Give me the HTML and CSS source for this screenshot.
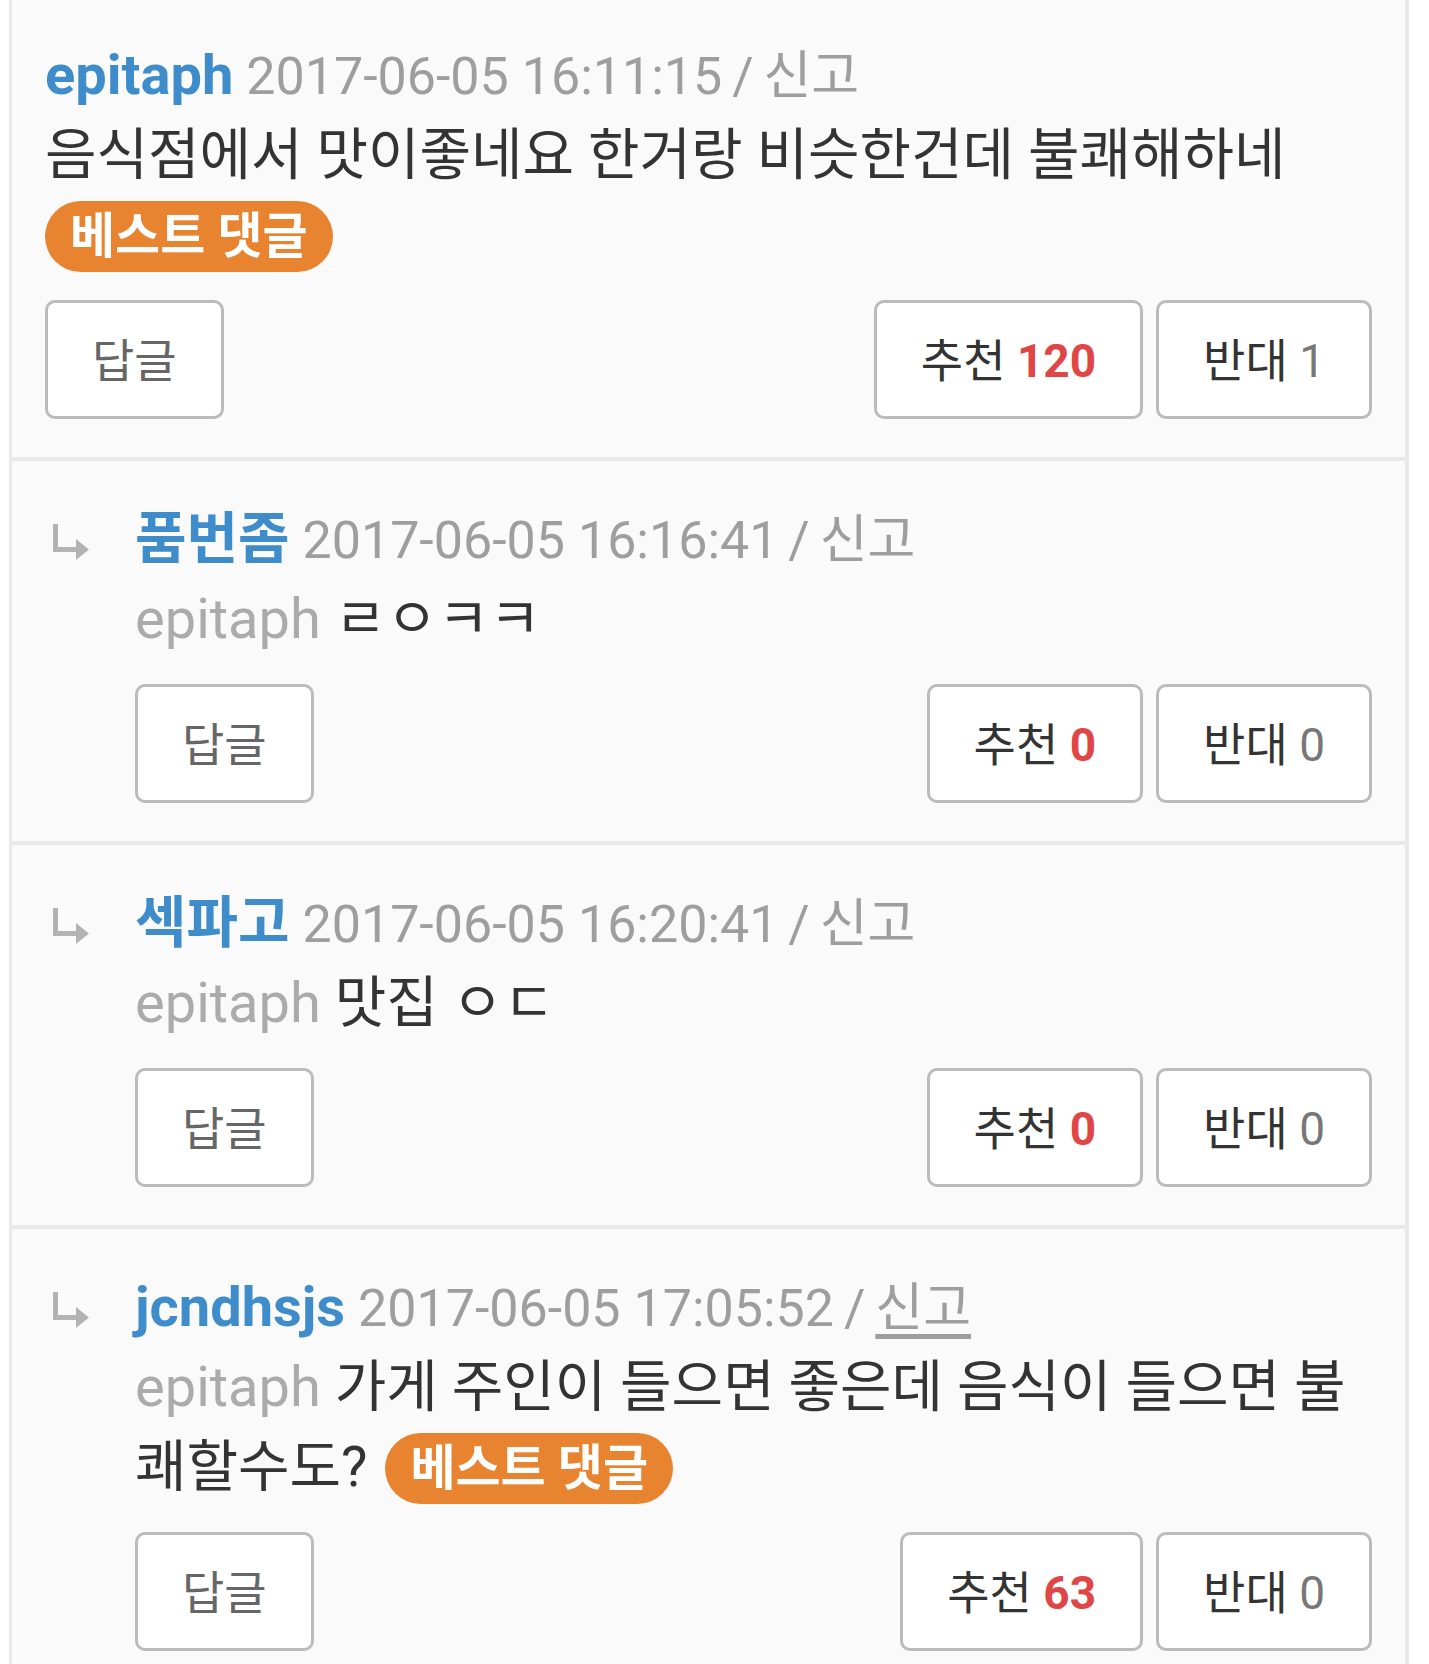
FILE: index.html
```html
<!DOCTYPE html>
<html>
<head>
  <meta charset="utf-8">
  <link rel="stylesheet" href="styles.css">
</head>
<body>
  <div class="comments">

    <div class="comment">
      <div class="comment-body">
        <div class="meta">
          <span class="author">epitaph</span>
          <span class="date">2017-06-05 16:11:15 <span class="slash">/</span> <a class="report">신고</a></span>
        </div>
        <div class="text">
          음식점에서 맛이좋네요 한거랑 비슷한건데 불쾌해하네 <span class="best">베스트 댓글</span>
        </div>
        <div class="actions">
          <button class="btn btn-reply">답글</button>
          <div class="votes">
            <button class="btn">추천 <b class="up">120</b></button>
            <button class="btn">반대 <span class="down">1</span></button>
          </div>
        </div>
      </div>
    </div>

    <div class="comment reply">
      <div class="reply-arrow">
        <svg width="40" height="40" viewBox="0 0 40 40">
          <path d="M4.5 2 V27.5 H28" fill="none" stroke="#b3b3b3" stroke-width="5"/>
          <polygon points="25,17 38,27.5 25,38" fill="#b3b3b3"/>
        </svg>
      </div>
      <div class="comment-body">
        <div class="meta">
          <span class="author">품번좀</span>
          <span class="date">2017-06-05 16:16:41 <span class="slash">/</span> <a class="report">신고</a></span>
        </div>
        <div class="text">
          <span class="mention">epitaph</span> ㄹㅇㅋㅋ
        </div>
        <div class="actions">
          <button class="btn btn-reply">답글</button>
          <div class="votes">
            <button class="btn">추천 <b class="up">0</b></button>
            <button class="btn">반대 <span class="down">0</span></button>
          </div>
        </div>
      </div>
    </div>

    <div class="comment reply">
      <div class="reply-arrow">
        <svg width="40" height="40" viewBox="0 0 40 40">
          <path d="M4.5 2 V27.5 H28" fill="none" stroke="#b3b3b3" stroke-width="5"/>
          <polygon points="25,17 38,27.5 25,38" fill="#b3b3b3"/>
        </svg>
      </div>
      <div class="comment-body">
        <div class="meta">
          <span class="author">섹파고</span>
          <span class="date">2017-06-05 16:20:41 <span class="slash">/</span> <a class="report">신고</a></span>
        </div>
        <div class="text">
          <span class="mention">epitaph</span> 맛집 ㅇㄷ
        </div>
        <div class="actions">
          <button class="btn btn-reply">답글</button>
          <div class="votes">
            <button class="btn">추천 <b class="up">0</b></button>
            <button class="btn">반대 <span class="down">0</span></button>
          </div>
        </div>
      </div>
    </div>

    <div class="comment reply">
      <div class="reply-arrow">
        <svg width="40" height="40" viewBox="0 0 40 40">
          <path d="M4.5 2 V27.5 H28" fill="none" stroke="#b3b3b3" stroke-width="5"/>
          <polygon points="25,17 38,27.5 25,38" fill="#b3b3b3"/>
        </svg>
      </div>
      <div class="comment-body">
        <div class="meta">
          <span class="author">jcndhsjs</span>
          <span class="date">2017-06-05 17:05:52 <span class="slash">/</span> <a class="report visited">신고</a></span>
        </div>
        <div class="text">
          <span class="mention">epitaph</span> 가게 주인이 들으면 좋은데 음식이 들으면 불쾌할수도? <span class="best">베스트 댓글</span>
        </div>
        <div class="actions">
          <button class="btn btn-reply">답글</button>
          <div class="votes">
            <button class="btn">추천 <b class="up">63</b></button>
            <button class="btn">반대 <span class="down">0</span></button>
          </div>
        </div>
      </div>
    </div>

  </div>
</body>
</html>
```

FILE: styles.css
```css
body {
  margin: 0;
  background: #fff;
  font-family: Roboto, "Noto Sans CJK KR", sans-serif;
  color: #333;
}
.comments {
  margin-left: 9px;
  width: 1400px;
  min-height: 1664px;
  box-sizing: border-box;
  background: #fafafa;
  border-left: 3px solid #e8e8e8;
  border-right: 4px solid #e8e8e8;
}
.comment {
  display: flex;
  padding: 40px 33px 38px 33px;
  border-bottom: 4px solid #e8e8e8;
}
.comment:first-child {
  padding-top: 37px;
}
.comment-body {
  flex: 1;
  min-width: 0;
}
.reply-arrow {
  width: 90px;
  flex: none;
}
.reply-arrow svg {
  display: block;
  margin: 21px 0 0 6px;
}
.meta {
  font-size: 52px;
  line-height: 80px;
  height: 80px;
  white-space: nowrap;
}
.author {
  color: #3f8ccb;
  font-weight: bold;
  font-size: 56px;
  line-height: 1;
}
.date {
  color: #9e9e9e;
}
.slash {
  margin: 0 -3px;
}
.report {
  color: #9e9e9e;
  text-decoration: none;
}
.report.visited {
  text-decoration: underline;
  text-underline-offset: 8px;
}
.text {
  font-size: 56px;
  line-height: 80px;
  margin-top: -2px;
  color: #333;
}
.mention {
  color: #ababab;
}
.best {
  display: inline-block;
  vertical-align: 1px;
  height: 71px;
  line-height: 71px;
  padding: 0 25px;
  border-radius: 36px;
  background: #e88330;
  color: #fff;
  font-size: 49px;
  font-weight: bold;
  margin-left: 4px;
}
.comment:first-child .best {
  margin-left: 0;
}
.actions {
  display: flex;
  justify-content: space-between;
  margin-top: 25px;
}
.votes {
  display: flex;
  gap: 13px;
}
.btn {
  height: 119px;
  padding: 0 44px 6px;
  box-sizing: border-box;
  background: #fff;
  border: 3px solid #bbb;
  border-radius: 10px;
  font-family: Roboto, "Noto Sans CJK KR", sans-serif;
  font-size: 46px;
  color: #333;
}
.btn-reply {
  color: #666;
}
.up {
  color: #e04646;
}
.down {
  color: #777;
}
```
